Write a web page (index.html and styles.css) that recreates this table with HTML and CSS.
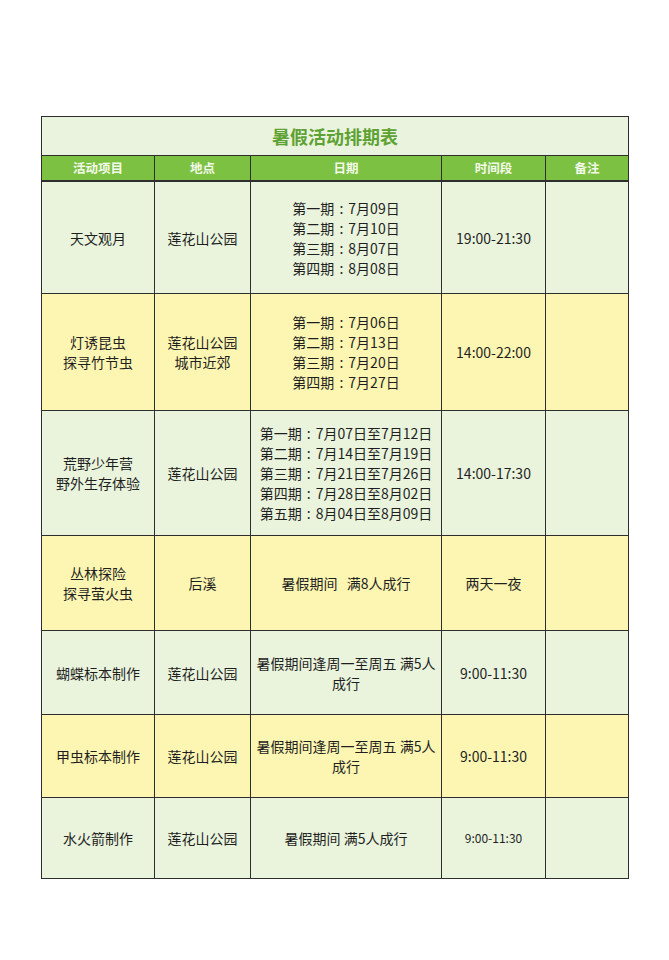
FILE: index.html
```html
<!DOCTYPE html>
<html lang="zh-CN">
<head>
<meta charset="utf-8">
<title>暑假活动排期表</title>
<link rel="stylesheet" href="styles.css">
</head>
<body>
<div class="page">
<table class="schedule">
  <colgroup>
    <col class="c1"><col class="c2"><col class="c3"><col class="c4"><col class="c5">
  </colgroup>
  <thead>
    <tr class="title-row"><th colspan="5">暑假活动排期表</th></tr>
    <tr class="head-row">
      <th>活动项目</th><th>地点</th><th>日期</th><th>时间段</th><th>备注</th>
    </tr>
  </thead>
  <tbody>
    <tr class="green r1">
      <td>天文观月</td>
      <td>莲花山公园</td>
      <td>第一期<span class="colon">:</span>7月09日<br>第二期<span class="colon">:</span>7月10日<br>第三期<span class="colon">:</span>8月07日<br>第四期<span class="colon">:</span>8月08日</td>
      <td>19:00-21:30</td>
      <td></td>
    </tr>
    <tr class="yellow r2">
      <td>灯诱昆虫<br>探寻竹节虫</td>
      <td>莲花山公园<br>城市近郊</td>
      <td>第一期<span class="colon">:</span>7月06日<br>第二期<span class="colon">:</span>7月13日<br>第三期<span class="colon">:</span>7月20日<br>第四期<span class="colon">:</span>7月27日</td>
      <td>14:00-22:00</td>
      <td></td>
    </tr>
    <tr class="green r3">
      <td>荒野少年营<br>野外生存体验</td>
      <td>莲花山公园</td>
      <td>第一期<span class="colon">:</span>7月07日至7月12日<br>第二期<span class="colon">:</span>7月14日至7月19日<br>第三期<span class="colon">:</span>7月21日至7月26日<br>第四期<span class="colon">:</span>7月28日至8月02日<br>第五期<span class="colon">:</span>8月04日至8月09日</td>
      <td>14:00-17:30</td>
      <td></td>
    </tr>
    <tr class="yellow r4">
      <td>丛林探险<br>探寻萤火虫</td>
      <td>后溪</td>
      <td>暑假期间&nbsp;&nbsp;&nbsp;满8人成行</td>
      <td>两天一夜</td>
      <td></td>
    </tr>
    <tr class="green r5">
      <td>蝴蝶标本制作</td>
      <td>莲花山公园</td>
      <td>暑假期间逢周一至周五 满5人<br>成行</td>
      <td>9:00-11:30</td>
      <td></td>
    </tr>
    <tr class="yellow r6">
      <td>甲虫标本制作</td>
      <td>莲花山公园</td>
      <td>暑假期间逢周一至周五 满5人<br>成行</td>
      <td>9:00-11:30</td>
      <td></td>
    </tr>
    <tr class="green r7">
      <td>水火箭制作</td>
      <td>莲花山公园</td>
      <td>暑假期间 满5人成行</td>
      <td class="small">9:00-11:30</td>
      <td></td>
    </tr>
  </tbody>
</table>
</div>
</body>
</html>
```
FILE: styles.css
```css
html, body {
  margin: 0;
  padding: 0;
  background: #ffffff;
}
body {
  font-family: "Noto Sans CJK SC", "Noto Sans", sans-serif;
  color: #1f1f1f;
}
.page {
  padding: 116px 0 0 41px;
}
.schedule {
  border-collapse: collapse;
  table-layout: fixed;
  width: 587px;
  border: 1.5px solid #2e2e2e;
}
.c1 { width: 113px; }
.c2 { width: 96px; }
.c3 { width: 191px; }
.c4 { width: 104px; }
.c5 { width: 83px; }

.schedule th,
.schedule td {
  border: 1.5px solid #2e2e2e;
  text-align: center;
  vertical-align: middle;
  padding: 0 2px;
  font-size: 14px;
  line-height: 20px;
  font-weight: normal;
}
.colon {
  display: inline-block;
  width: 14px;
  text-align: center;
}
.title-row th {
  height: 38px;
  background: #eaf3dd;
  color: #5ea234;
  font-size: 18px;
  font-weight: bold;
  line-height: 24px;
  border-bottom: 1.5px solid #2e2e2e;
}
.head-row th {
  height: 24px;
  background: #7dc143;
  color: #f3faea;
  font-size: 12.5px;
  font-weight: bold;
  line-height: 16px;
  border-bottom: 2px solid #2e2e2e;
}
.green td { background: #eaf4dd; }
.yellow td { background: #fdf6b2; }
.r1 td { height: 111px; }
.r2 td { height: 116px; }
.r3 td { height: 124px; }
.r4 td { height: 94px; }
.r5 td { height: 83px; }
.r6 td { height: 82px; }
.r7 td { height: 80px; }
.small { font-size: 12px !important; }
```
